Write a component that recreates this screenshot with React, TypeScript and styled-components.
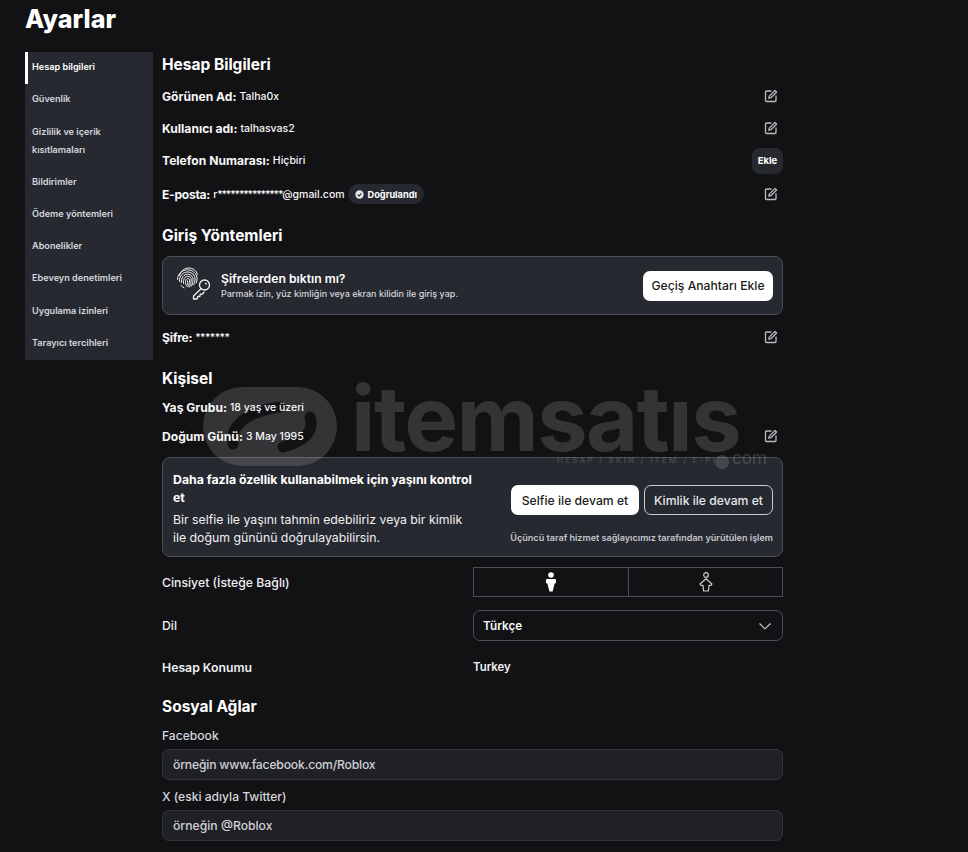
import React from "react";
import styled, { createGlobalStyle } from "styled-components";

const GlobalStyle = createGlobalStyle`
	html, body {
		margin: 0;
		padding: 0;
		background: #121215;
		color: #f7f7f8;
		font-family: "Inter", "Noto Sans", sans-serif;
		overflow: hidden;
	}
	* {
		box-sizing: border-box;
	}
`;

const menu = [
	"Hesap bilgileri",
	"Güvenlik",
	"Gizlilik ve içerik kısıtlamaları",
	"Bildirimler",
	"Ödeme yöntemleri",
	"Abonelikler",
	"Ebeveyn denetimleri",
	"Uygulama izinleri",
	"Tarayıcı tercihleri",
];

const EditIcon = () => (
	<svg width="14" height="14" viewBox="0 0 14 14" fill="none" stroke="#bbbcc0" strokeWidth="1.3" strokeLinejoin="round" strokeLinecap="round">
		<path d="M7 2H2.6C1.9 2 1.5 2.4 1.5 3.1v8.3c0 .7.4 1.1 1.1 1.1h8.3c.7 0 1.1-.4 1.1-1.1V7" />
		<path d="M11 1.4l1.6 1.6-5.7 5.7-2.1.5.5-2.1z" />
	</svg>
);

const CheckBadge = () => (
	<svg width="9" height="9" viewBox="0 0 10 10">
		<circle cx="5" cy="5" r="4.6" fill="#e6e6e8" />
		<path d="M3 5.1l1.5 1.5L7.1 3.8" fill="none" stroke="#26272d" strokeWidth="1.2" />
	</svg>
);

const PasskeyIcon = () => (
	<PasskeySvg width="36" height="34" viewBox="0 0 36 34" fill="none" stroke="#f2f2f3" strokeLinecap="round">
		<g strokeWidth="1">
			<path d="M3.5 8.5C5 3.5 9 1 12.500 1c4.500 0 8 2.500 9 6.500" />
			<path d="M1.500 12.500C1.500 6.500 6.500 2.800 11.500 2.800c5 0 9.500 3.500 9.500 9 0 1.500-.2 3-.8 4.200" />
			<path d="M3.500 14.500C3 9 7 5 11.500 5c4.500 0 7.500 3 7.500 7 0 2.500-.5 4.500-1.500 6" />
			<path d="M5.500 15.500C5 10.500 8 7.200 11.500 7.200c3.500 0 5.500 2.300 5.500 5.300 0 2.500-.5 4.500-1.500 6.500" />
			<path d="M7.500 16.500C7 12 9 9.300 11.500 9.300c2.500 0 3.700 1.500 3.700 3.700 0 2.500-.7 4.500-1.700 7" />
			<path d="M9.700 17.500C9 14 10 11.500 11.700 11.500c1.300 0 1.800 1 1.800 2.300 0 2.500-.7 4.500-1.700 6" />
			<path d="M11.600 14c.2 2-.2 3.700-1 5" />
			<path d="M5 18.500c1 1 2 1.800 3 2.300" />
		</g>
		<g strokeWidth="1.300" strokeLinejoin="round" transform="translate(0 -.5)">
			<circle cx="28.500" cy="18.500" r="5" />
			<path d="M25 22.200L17.500 29.500v3h3.500l.8-2.500h2l.5-2.300 2.200-.2 1.500-1.700" />
			<circle cx="29.800" cy="17.200" r=".9" fill="#f2f2f3" stroke="none" />
		</g>
	</PasskeySvg>
);

const MaleIcon = () => (
	<svg width="10" height="20" viewBox="0 0 10 20" fill="#ffffff">
		<circle cx="5" cy="3" r="2.800" />
		<path d="M1.200 7h7.600c.7 0 1.200.5 1.200 1.100v2.500c0 .5-.4.900-.9.900h-.5L6.600 19.500H3.400L1.400 11.500H.9c-.5 0-.9-.4-.9-.9V8.100C0 7.500.5 7 1.200 7z" />
	</svg>
);

const FemaleIcon = () => (
	<svg width="14" height="20" viewBox="0 0 14 20" fill="none" stroke="#c9cacd" strokeWidth="1.200" strokeLinejoin="round">
		<circle cx="7" cy="3" r="2.300" />
		<path d="M7 6.800l6 5.200-1 1.400h-2l-.6 5.600H4.600L4 13.400H2l-1-1.400z" />
	</svg>
);

const Chevron = () => (
	<svg width="14" height="8" viewBox="0 0 14 8" fill="none" stroke="#d5d6d9" strokeWidth="1.100">
		<path d="M1.500 1.500L7 6.800l5.500-5.300" />
	</svg>
);

const WatermarkLogo = () => (
	<svg width="134" height="82" viewBox="0 0 134 82">
		<mask id="logo-cut">
			<rect x="0" y="1" width="134" height="79" rx="39.500" fill="#ffffff" />
			<path d="M30 58C27 42 40 26 77 21" fill="none" stroke="#000000" strokeWidth="11" strokeLinecap="round" />
			<path d="M107 31C112 46 100 56 80 61" fill="none" stroke="#000000" strokeWidth="11" strokeLinecap="round" />
		</mask>
		<rect x="0" y="0" width="134" height="82" fill="#ffffff" mask="url(#logo-cut)" />
	</svg>
);

const App = () => {
	return (
		<Page>
			<GlobalStyle />
			<Title>Ayarlar</Title>
			<Layout>
				<Sidebar>
					{menu.map((item, i) => (
						<MenuItem key={item} $active={i === 0}>
							{item}
						</MenuItem>
					))}
				</Sidebar>
				<Main>
					<Heading>Hesap Bilgileri</Heading>
					<InfoRows>
						<InfoRow>
							<InfoText>
								<b>Görünen Ad:</b> <span>Talha0x</span>
							</InfoText>
							<IconButton><EditIcon /></IconButton>
						</InfoRow>
						<InfoRow>
							<InfoText>
								<b>Kullanıcı adı:</b> <span>talhasvas2</span>
							</InfoText>
							<IconButton><EditIcon /></IconButton>
						</InfoRow>
						<InfoRow>
							<InfoText>
								<b>Telefon Numarası:</b> <span>Hiçbiri</span>
							</InfoText>
							<AddButton>Ekle</AddButton>
						</InfoRow>
						<InfoRow $top={2}>
							<InfoText>
								<TightLabel>E-posta:</TightLabel>{" "}
								<span>
									r<Stars $spacing={-1.13}>***************</Stars>@gmail.com
								</span>
								<Verified>
									<CheckBadge />
									Doğrulandı
								</Verified>
							</InfoText>
							<IconButton><EditIcon /></IconButton>
						</InfoRow>
					</InfoRows>

					<Heading $top={13}>Giriş Yöntemleri</Heading>
					<PasskeyCard>
						<PasskeyLeft>
							<PasskeyIcon />
							<div>
								<PasskeyTitle>Şifrelerden bıktın mı?</PasskeyTitle>
								<PasskeySub>Parmak izin, yüz kimliğin veya ekran kilidin ile giriş yap.</PasskeySub>
							</div>
						</PasskeyLeft>
						<WhiteButton $width={130}>Geçiş Anahtarı Ekle</WhiteButton>
					</PasskeyCard>
					<InfoRow $top={6}>
						<InfoText>
							<TightLabel>Şifre:</TightLabel>{" "}
							<span>
								<Stars $spacing={-0.6}>*******</Stars>
							</span>
						</InfoText>
						<IconButton><EditIcon /></IconButton>
					</InfoRow>

					<Heading $top={13}>Kişisel</Heading>
					<ShortRow $top={3}>
						<InfoText>
							<b>Yaş Grubu:</b> <span>18 yaş ve üzeri</span>
						</InfoText>
					</ShortRow>
					<ShortRow $top={1}>
						<InfoText>
							<b>Doğum Günü:</b> <span>3 May 1995</span>
						</InfoText>
						<IconButton><EditIcon /></IconButton>
					</ShortRow>

					<AgeCard>
						<AgeText>
							<AgeTitle>Daha fazla özellik kullanabilmek için yaşını kontrol et</AgeTitle>
							<AgeBody>Bir selfie ile yaşını tahmin edebiliriz veya bir kimlik ile doğum gününü doğrulayabilirsin.</AgeBody>
						</AgeText>
						<AgeActions>
							<AgeButtons>
								<WhiteButton $width={128}>Selfie ile devam et</WhiteButton>
								<OutlineButton $width={129}>Kimlik ile devam et</OutlineButton>
							</AgeButtons>
							<AgeNote>Üçüncü taraf hizmet sağlayıcımız tarafından yürütülen işlem</AgeNote>
						</AgeActions>
					</AgeCard>

					<FieldRow $top={10} $height={30}>
						<FieldLabel>Cinsiyet (İsteğe Bağlı)</FieldLabel>
						<GenderGroup>
							<GenderCell><MaleIcon /></GenderCell>
							<GenderCell><FemaleIcon /></GenderCell>
						</GenderGroup>
					</FieldRow>
					<FieldRow $top={13} $height={31}>
						<FieldLabel>Dil</FieldLabel>
						<Select>
							Türkçe
							<Chevron />
						</Select>
					</FieldRow>
					<FieldRow $top={16} $height={20}>
						<FieldLabel $strong>Hesap Konumu</FieldLabel>
						<LocationValue>Turkey</LocationValue>
					</FieldRow>

					<Heading $top={17}>Sosyal Ağlar</Heading>
					<InputLabel $top={10}>Facebook</InputLabel>
					<TextInput $tight placeholder="örneğin www.facebook.com/Roblox" />
					<InputLabel $top={9}>X (eski adıyla Twitter)</InputLabel>
					<TextInput placeholder="örneğin @Roblox" />
				</Main>
			</Layout>
			<Watermark>
				<WatermarkLogo />
				<WatermarkWord>itemsatıs</WatermarkWord>
				<WatermarkTag>HESAP / SKIN / ITEM / E-PIN</WatermarkTag>
				<WatermarkDot />
				<WatermarkCom>com</WatermarkCom>
			</Watermark>
		</Page>
	);
};

export default App;

const Page = styled.div`
	position: relative;
	width: 968px;
	height: 852px;
	padding-left: 25px;
	overflow: hidden;
	background: #121215;
`;

const Title = styled.h1`
	margin: 0;
	height: 52px;
	padding-top: 2px;
	font-size: 25.1px;
	line-height: 34px;
	font-weight: 800;
	color: #ffffff;
`;

const Layout = styled.div`
	display: flex;
	gap: 9px;
	align-items: flex-start;
`;

const Sidebar = styled.nav`
	width: 128px;
	background: #272930;
	display: flex;
	flex-direction: column;
`;

const MenuItem = styled.div<{ $active?: boolean }>`
	padding: 6px 7px 8px 4px;
	min-height: 32.3px;
	font-size: 9.15px;
	line-height: 18px;
	font-weight: 600;
	color: ${(p) => (p.$active ? "#ffffff" : "#d5d7dd")};
	border-left: 3px solid ${(p) => (p.$active ? "#ffffff" : "transparent")};
`;

const Main = styled.main`
	width: 621px;
	display: flex;
	flex-direction: column;
`;

const Heading = styled.h2<{ $top?: number }>`
	margin: ${(p) => p.$top ?? 0}px 0 0;
	height: 24px;
	font-size: 15.5px;
	line-height: 26px;
	font-weight: 700;
	color: #ffffff;
`;

const InfoRows = styled.div`
	margin-top: 4px;
	display: flex;
	flex-direction: column;
`;

const InfoRow = styled.div<{ $top?: number }>`
	margin-top: ${(p) => p.$top ?? 0}px;
	height: 32px;
	display: flex;
	align-items: center;
	justify-content: space-between;
`;

const ShortRow = styled(InfoRow)`
	height: 28px;
`;

const InfoText = styled.div`
	display: flex;
	align-items: center;
	gap: 3px;
	font-size: 12.1px;
	font-weight: 700;
	color: #f7f7f8;

	b {
		font-weight: 700;
	}

	span {
		font-size: 10.5px;
		font-weight: 500;
	}
`;

const TightLabel = styled.b`
	letter-spacing: -0.28px;
`;

const Stars = styled.span<{ $spacing: number }>`
	letter-spacing: ${(p) => p.$spacing}px;
`;

const IconButton = styled.div`
	width: 14px;
	height: 14px;
	margin-right: 5px;
	display: flex;
`;

const AddButton = styled.div`
	width: 31px;
	height: 26px;
	margin-top: 2px;
	padding-bottom: 2px;
	border-radius: 8px;
	background: #272930;
	display: flex;
	align-items: center;
	justify-content: center;
	font-size: 9.5px;
	font-weight: 700;
	color: #ffffff;
`;

const Verified = styled.div`
	height: 20px;
	padding: 0 7px;
	display: flex;
	align-items: center;
	gap: 4px;
	border-radius: 10px;
	background: #272930;
	font-size: 9.2px;
	font-weight: 700;
	color: #ffffff;
`;

const PasskeyCard = styled.div`
	margin-top: 9px;
	height: 59px;
	padding: 0 9px 0 13px;
	display: flex;
	align-items: center;
	justify-content: space-between;
	background: #272930;
	border: 1px solid #4c4e57;
	border-radius: 8px;
`;

const PasskeyLeft = styled.div`
	display: flex;
	align-items: center;
	gap: 9px;
`;

const PasskeySvg = styled.svg`
	margin-top: -3px;
`;

const PasskeyTitle = styled.div`
	font-size: 12.2px;
	line-height: 16px;
	font-weight: 600;
	color: #ffffff;
`;

const PasskeySub = styled.div`
	font-size: 9px;
	line-height: 14px;
	font-weight: 500;
	color: #d5d7dd;
`;

const WhiteButton = styled.div<{ $width: number }>`
	width: ${(p) => p.$width}px;
	height: 30px;
	display: flex;
	align-items: center;
	justify-content: center;
	border-radius: 7px;
	background: #ffffff;
	font-size: 12.2px;
	font-weight: 500;
	color: #1a1b20;
	white-space: nowrap;
`;

const OutlineButton = styled(WhiteButton)`
	background: transparent;
	border: 1px solid #c9cad0;
	color: #e6e7ea;
`;

const AgeCard = styled.div`
	margin-top: 7px;
	height: 100px;
	padding: 13px 9px 0 10px;
	display: flex;
	justify-content: space-between;
	background: #272930;
	border: 1px solid #4c4e57;
	border-radius: 8px;
`;

const AgeText = styled.div`
	width: 305px;
`;

const AgeTitle = styled.div`
	font-size: 12.3px;
	line-height: 18px;
	font-weight: 700;
	color: #ffffff;
`;

const AgeBody = styled.div`
	margin-top: 4px;
	font-size: 12.3px;
	line-height: 18px;
	font-weight: 400;
	color: #f0f0f2;
`;

const AgeActions = styled.div`
	padding-top: 14px;
	display: flex;
	flex-direction: column;
	align-items: flex-end;
`;

const AgeButtons = styled.div`
	display: flex;
	gap: 5px;
`;

const AgeNote = styled.div`
	margin-top: 16px;
	font-size: 9.07px;
	line-height: 14px;
	font-weight: 600;
	color: #c4c6cc;
	white-space: nowrap;
`;

const FieldRow = styled.div<{ $top: number; $height: number }>`
	margin-top: ${(p) => p.$top}px;
	height: ${(p) => p.$height}px;
	display: grid;
	grid-template-columns: 311px 310px;
	align-items: center;
`;

const FieldLabel = styled.div<{ $strong?: boolean }>`
	font-size: 12.25px;
	font-weight: ${(p) => (p.$strong ? 600 : 500)};
	color: #f0f0f2;
`;

const LocationValue = styled.div`
	font-size: 11.4px;
	font-weight: 600;
	color: #f0f0f2;
`;

const GenderGroup = styled.div`
	height: 30px;
	display: grid;
	grid-template-columns: 154px 154px;
	border: 1px solid #4c4e57;
`;

const GenderCell = styled.div`
	display: flex;
	align-items: center;
	justify-content: center;

	& + & {
		border-left: 1px solid #4c4e57;
	}
`;

const Select = styled.div`
	height: 31px;
	padding: 0 10px 0 9px;
	display: flex;
	align-items: center;
	justify-content: space-between;
	border: 1px solid #4c4e57;
	border-radius: 7px;
	font-size: 11.7px;
	font-weight: 600;
	color: #f7f7f8;
`;

const InputLabel = styled.div<{ $top: number }>`
	margin-top: ${(p) => p.$top}px;
	height: 15px;
	font-size: 12.1px;
	line-height: 15px;
	font-weight: 500;
	color: #d5d7dd;
`;

const TextInput = styled.input<{ $tight?: boolean }>`
	margin-top: 6px;
	height: 31px;
	padding: 0 10px;
	width: 100%;
	background: #202127;
	border: 1px solid #33353d;
	border-radius: 7px;
	font-family: inherit;
	font-size: 12.2px;
	font-weight: 500;
	letter-spacing: ${(p) => (p.$tight ? "-0.2px" : "0")};
	color: #f0f0f2;
	outline: none;

	&::placeholder {
		color: #d0d1d6;
		opacity: 1;
	}
`;

/* filigran: sayfanin ustunde duruyor */
const Watermark = styled.div`
	position: absolute;
	left: 203px;
	top: 386px;
	width: 565px;
	height: 82px;
	opacity: 0.14;
	pointer-events: none;
`;

const WatermarkWord = styled.div`
	position: absolute;
	left: 148px;
	top: 0;
	font-size: 90px;
	line-height: 66px;
	font-weight: 700;
	color: #ffffff;
	letter-spacing: -1.5px;
`;

const WatermarkTag = styled.div`
	position: absolute;
	left: 354px;
	top: 69px;
	font-size: 8px;
	line-height: 10px;
	font-weight: 600;
	letter-spacing: 2.2px;
	color: #ffffff;
	white-space: nowrap;
`;

const WatermarkDot = styled.div`
	position: absolute;
	left: 512px;
	top: 69px;
	width: 14px;
	height: 14px;
	border-radius: 50%;
	background: #ffffff;
`;

const WatermarkCom = styled.div`
	position: absolute;
	left: 529px;
	top: 62px;
	font-size: 17px;
	line-height: 20px;
	font-weight: 500;
	color: #ffffff;
`;
